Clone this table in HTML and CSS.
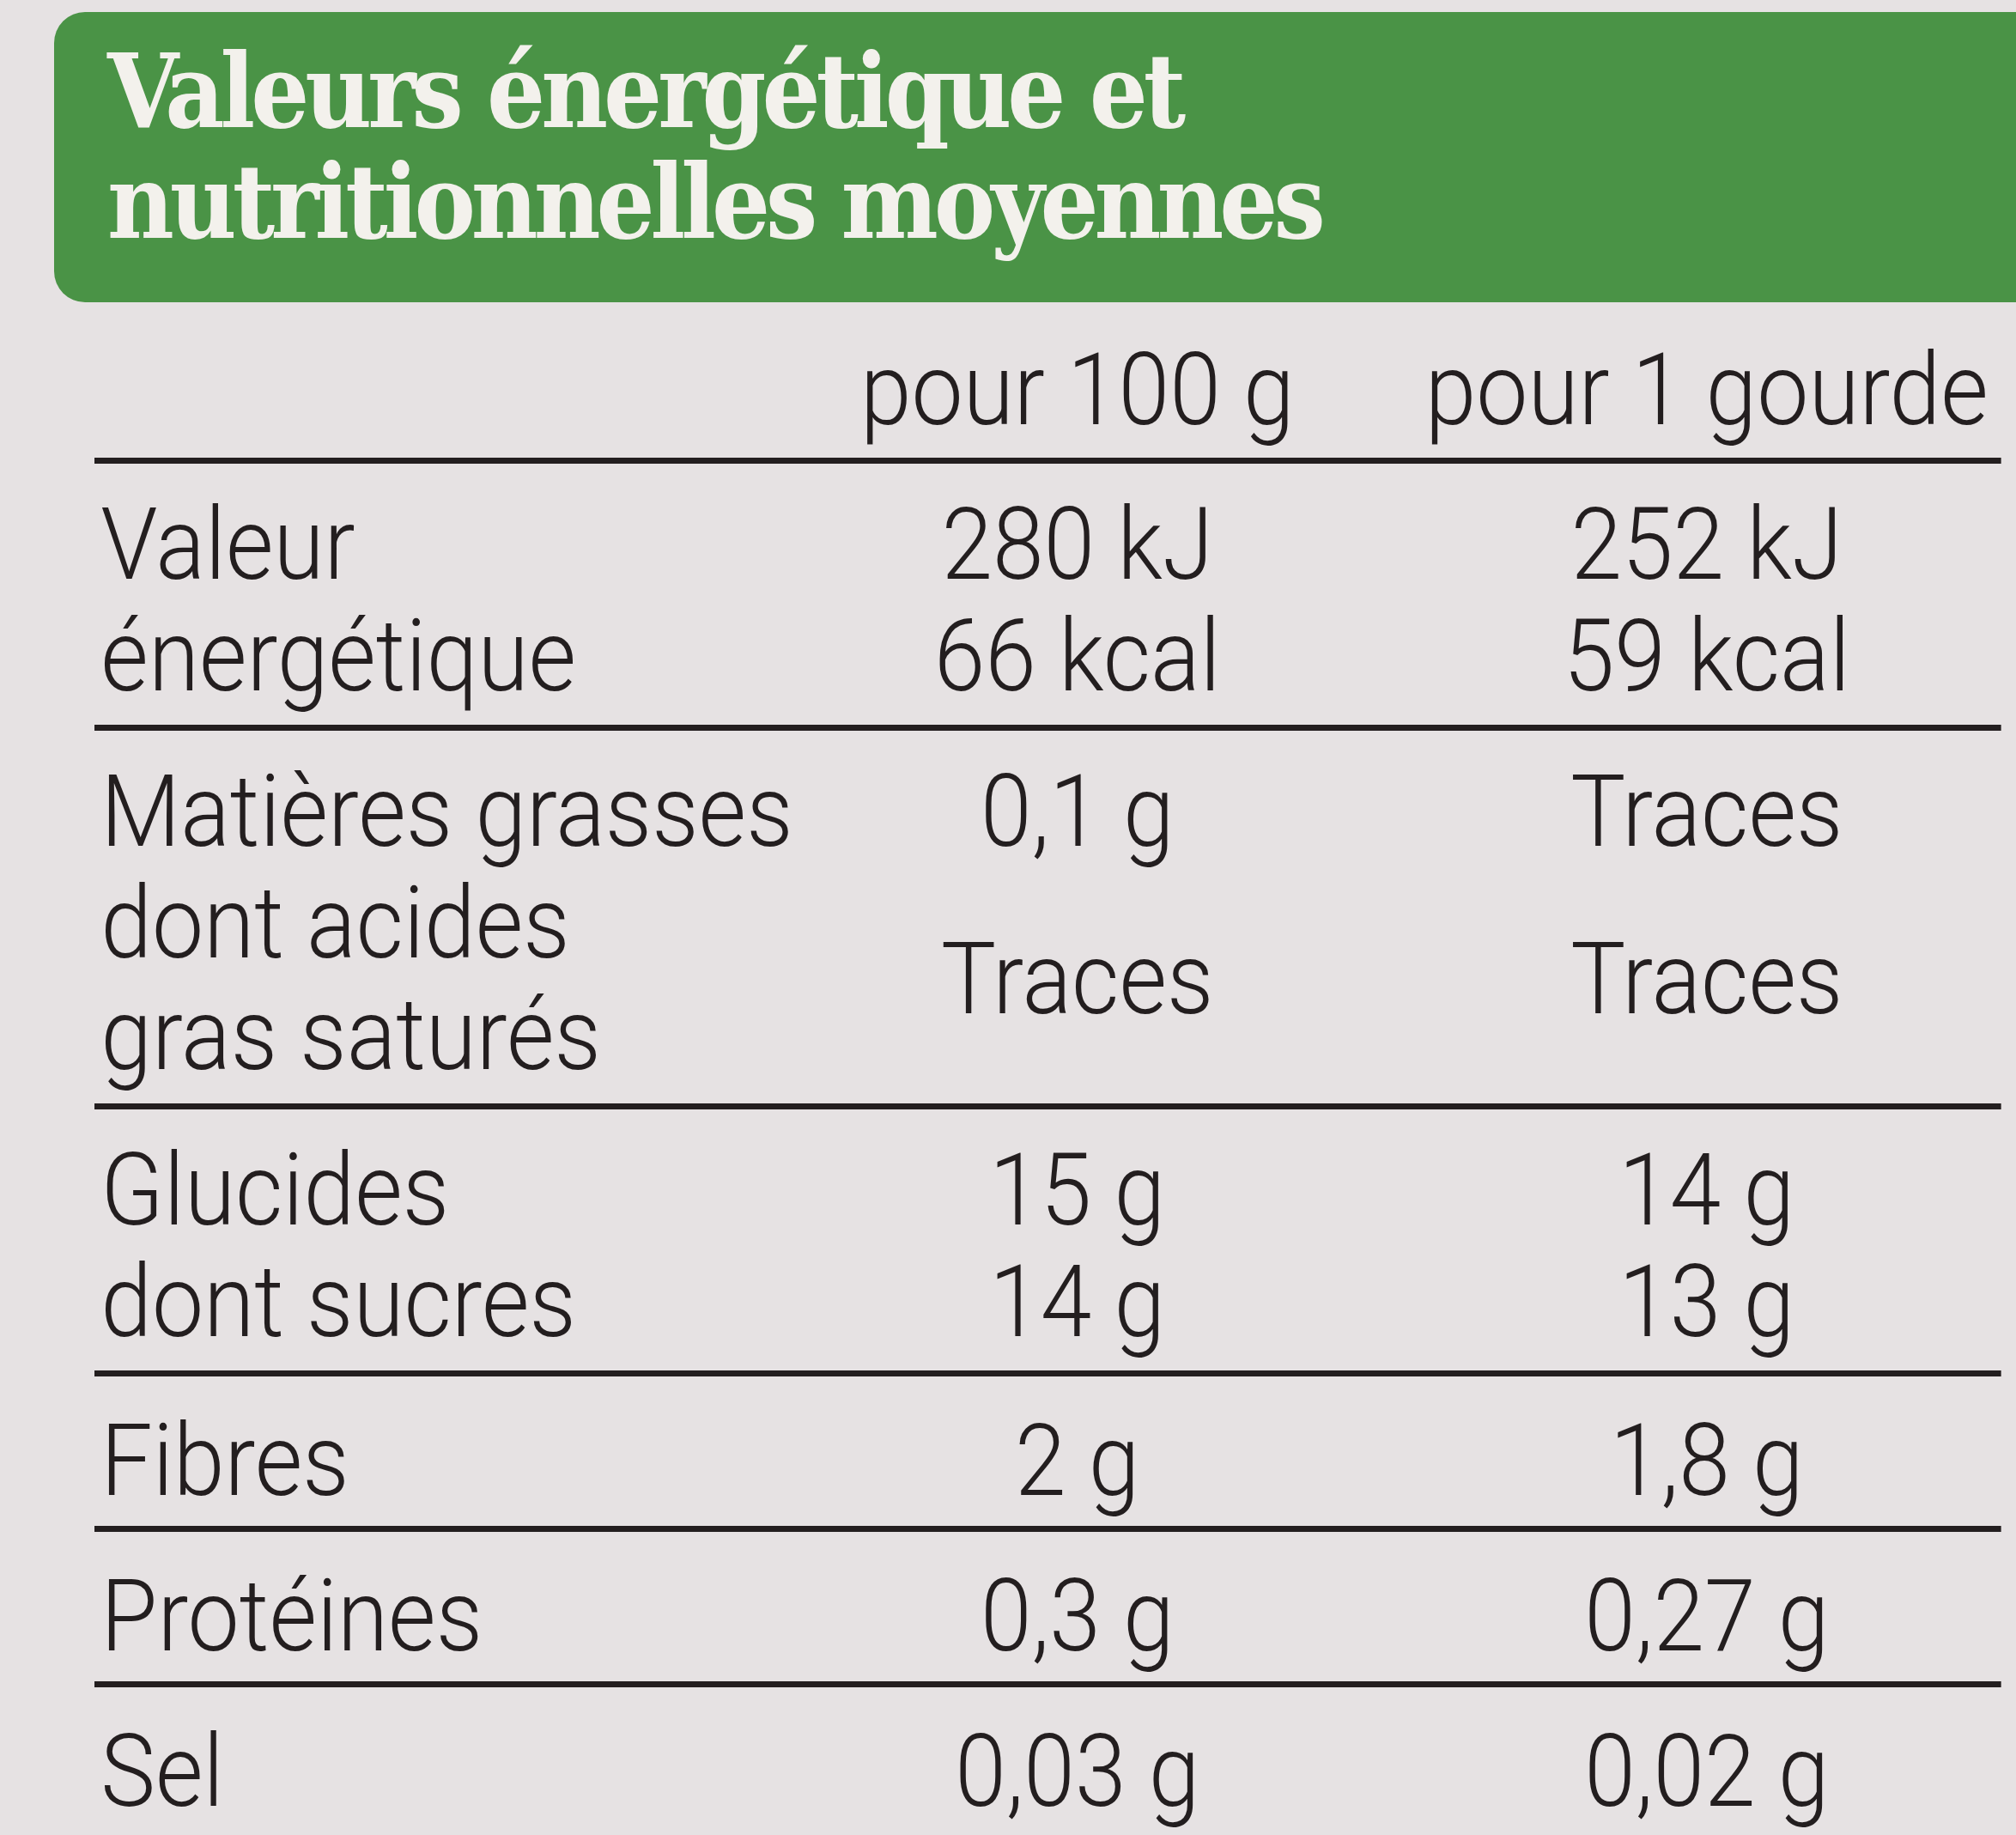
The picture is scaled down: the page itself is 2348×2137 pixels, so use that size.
FILE: index.html
```html
<!DOCTYPE html>
<html lang="fr">
<head>
<meta charset="utf-8">
<title>Valeurs nutritionnelles</title>
<link rel="stylesheet" href="styles.css">
</head>
<body>
<div class="label">
  <header class="banner">
    <h1 class="title">Valeurs énergétique et<br>nutritionnelles moyennes</h1>
  </header>
  <div class="table">
    <div class="head">
      <div class="cell lab"></div>
      <div class="cell val">pour 100 g</div>
      <div class="cell val v3">pour 1 gourde</div>
    </div>
    <div class="section">
      <div class="cell lab">Valeur<br>énergétique</div>
      <div class="cell val">280 kJ<br>66 kcal</div>
      <div class="cell val v3">252 kJ<br>59 kcal</div>
    </div>
    <div class="section">
      <div class="cell lab">Matières grasses</div>
      <div class="cell val">0,1 g</div>
      <div class="cell val v3">Traces</div>
      <div class="cell lab">dont acides<br>gras saturés</div>
      <div class="cell val">Traces</div>
      <div class="cell val v3">Traces</div>
    </div>
    <div class="section">
      <div class="cell lab">Glucides<br>dont sucres</div>
      <div class="cell val">15 g<br>14 g</div>
      <div class="cell val v3">14 g<br>13 g</div>
    </div>
    <div class="section s-single">
      <div class="cell lab">Fibres</div>
      <div class="cell val">2 g</div>
      <div class="cell val v3">1,8 g</div>
    </div>
    <div class="section s-single">
      <div class="cell lab">Protéines</div>
      <div class="cell val">0,3 g</div>
      <div class="cell val v3">0,27 g</div>
    </div>
    <div class="section s-single">
      <div class="cell lab">Sel</div>
      <div class="cell val">0,03 g</div>
      <div class="cell val v3">0,02 g</div>
    </div>
  </div>
</div>
</body>
</html>
```
FILE: styles.css
```css
html, body {
  margin: 0;
  padding: 0;
}
body {
  background: #e6e2e3;
  width: 2348px;
  height: 2137px;
  overflow: hidden;
}
.label {
  padding-top: 14px;
}
.banner {
  margin-left: 63px;
  background: #4a9346;
  border-radius: 36px 0 0 36px;
  padding: 28px 0 52px 62px;
  height: 258px;
}
.title {
  margin: 0;
  font-family: "DejaVu Serif Condensed", "DejaVu Serif", serif;
  font-stretch: condensed;
  font-weight: 700;
  font-size: 119px;
  line-height: 129px;
  letter-spacing: -5px;
  color: #f3f1ec;
  white-space: nowrap;
}
/* narrow label typeface: the table is drawn at full size, then condensed horizontally */
.table {
  margin-left: 110px;
  width: 2419px;
  margin-top: 37px;
  transform: scaleX(0.918);
  transform-origin: 0 0;
  font-family: Roboto, Inter, "Liberation Sans", sans-serif;
  font-size: 117px;
  font-weight: 300;
  line-height: 130px;
  color: #231e1f;
}
.head, .section {
  display: grid;
  grid-template-columns: 866px 762px 791px;
}
.head {
  padding-bottom: 14px;
}
.section {
  border-top: 7px solid #231e1f;
  padding: 29px 0 15px;
}
.s-single {
  padding: 33px 0 11px;
}
.cell {
  white-space: nowrap;
}
.lab {
  padding-left: 8px;
}
.val {
  text-align: center;
  align-self: center;
}
.v3 {
  padding-left: 44px;
}
```
